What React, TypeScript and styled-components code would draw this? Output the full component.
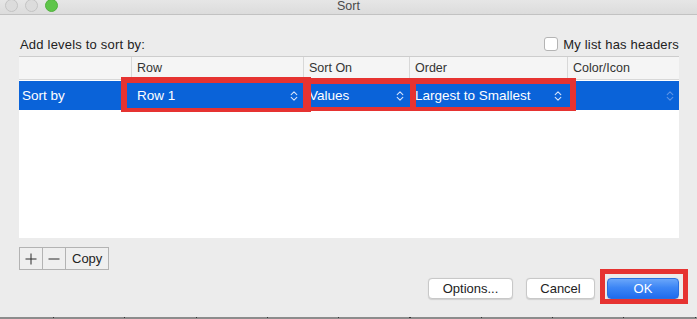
import styled, {createGlobalStyle} from "styled-components";

const GlobalStyle = createGlobalStyle`
  html, body {
    margin: 0;
    padding: 0;
    background: #ececec;
    font-family: "Liberation Sans", Arial, sans-serif;
    -webkit-font-smoothing: antialiased;
  }
`

const columns = [
    {title: "", value: "Sort by", width: "112px", select: false},
    {title: "Row", value: "Row 1", width: "172px", select: true},
    {title: "Sort On", value: "Values", width: "106px", select: true},
    {title: "Order", value: "Largest to Smallest", width: "158px", select: true},
    {title: "Color/Icon", value: "", width: "1fr", select: true},
]

const gridCols = columns.map(c => c.width).join(" ")

const Chevrons = ({faded}: { faded?: boolean }) => (
    <ChevronBox width="8" height="12" viewBox="0 0 8 12" $faded={faded}>
        <path d="M1.2 4.6 L4 1.8 L6.8 4.6" />
        <path d="M1.2 7.4 L4 10.2 L6.8 7.4" />
    </ChevronBox>
)

const PlusIcon = () => (
    <SegIcon width="12" height="12" viewBox="0 0 12 12">
        <path d="M6 0.5 V11.5 M0.5 6 H11.5" />
    </SegIcon>
)

const MinusIcon = () => (
    <SegIcon width="12" height="12" viewBox="0 0 12 12">
        <path d="M0.5 6 H11.5" />
    </SegIcon>
)

export default function App() {
    return <>
        <GlobalStyle/>
        <Window>
            <TitleBar>
                <Lights>
                    <Light/>
                    <Light/>
                    <Light $color="#5fc54a" $border="#52b13f"/>
                </Lights>
                <Title>Sort</Title>
            </TitleBar>

            <Content>
                <TopRow>
                    <Label>Add levels to sort by:</Label>
                    <CheckLabel>
                        <CheckBox/>
                        My list has headers
                    </CheckLabel>
                </TopRow>

                <Table>
                    <HeaderRow>
                        {columns.map((c, i) => (
                            <HeaderCell key={i} $first={i === 0}>{c.title}</HeaderCell>
                        ))}
                    </HeaderRow>
                    <SelectedRow>
                        {columns.map((c, i) => (
                            <Cell key={i} $first={i === 0}>
                                <span>{c.value}</span>
                                {c.select && <Chevrons faded={i === 4}/>}
                            </Cell>
                        ))}
                        <Highlight $left={102} $top={-4} $width={190} $height={35}/>
                        <Highlight $left={284} $top={-3} $width={113} $height={33}/>
                        <Highlight $left={391} $top={-3} $width={166} $height={33}/>
                    </SelectedRow>
                </Table>

                <Segmented>
                    <SegButton $narrow><PlusIcon/></SegButton>
                    <SegButton $narrow><MinusIcon/></SegButton>
                    <SegButton>Copy</SegButton>
                </Segmented>

                <Actions>
                    <PushButton style={{width: 85}}>Options...</PushButton>
                    <PushButton style={{width: 69}}>Cancel</PushButton>
                    <OkWrap>
                        <PushButton $primary style={{width: 72}}>OK</PushButton>
                        <OkHighlight/>
                    </OkWrap>
                </Actions>
            </Content>

            <Footer/>
        </Window>
    </>
}

const Window = styled.div`
  width: 697px;
  height: 319px;
  display: flex;
  flex-direction: column;
  background: #ececec;
  overflow: hidden;
`

const TitleBar = styled.div`
  position: relative;
  height: 14px;
  flex-shrink: 0;
  display: flex;
  align-items: center;
  background: linear-gradient(180deg, #e6e6e6 0%, #dcdcdc 100%);
  border-bottom: 1px solid #c2c2c2;
`

const Lights = styled.div`
  display: flex;
  gap: 7px;
  padding-left: 5px;
  margin-top: -3px;
`

const Light = styled.div<{ $color?: string, $border?: string }>`
  width: 11px;
  height: 11px;
  border-radius: 50%;
  background: ${p => p.$color || "#dcdcdc"};
  border: 0.5px solid ${p => p.$border || "#c4c4c4"};
`

const Title = styled.div`
  position: absolute;
  left: 0;
  right: 0;
  top: 0;
  line-height: 12px;
  text-align: center;
  font-size: 12.5px;
  color: #4a4a4a;
`

const Content = styled.div`
  padding: 0 18px 0 19px;
  display: flex;
  flex-direction: column;
`

const TopRow = styled.div`
  margin-top: 22px;
  height: 14px;
  display: flex;
  align-items: center;
  justify-content: space-between;
  font-size: 13px;
  color: #222;
`

const Label = styled.span`
  padding-left: 1px;
  letter-spacing: 0.2px;
`

const CheckLabel = styled.label`
  display: flex;
  align-items: center;
  gap: 5px;
  letter-spacing: 0.2px;
`

const CheckBox = styled.span`
  width: 12px;
  height: 12px;
  background: #fff;
  border: 1px solid #b4b4b4;
  border-radius: 3px;
`

const Table = styled.div`
  margin-top: 5px;
  height: 181px;
  background: #fff;
  border-top: 1px solid #cdcdcd;
  display: flex;
  flex-direction: column;
`

const HeaderRow = styled.div`
  display: grid;
  grid-template-columns: ${gridCols};
  height: 22px;
  background: #f5f5f5;
  border-bottom: 1px solid #d8d8d8;
`

const HeaderCell = styled.div<{ $first?: boolean }>`
  display: flex;
  align-items: center;
  padding-left: 5px;
  font-size: 12.5px;
  color: #333;
  border-left: ${p => p.$first ? "none" : "1px solid #d8d8d8"};
`

const SelectedRow = styled.div`
  position: relative;
  margin-top: 1px;
  display: grid;
  grid-template-columns: ${gridCols};
  height: 29px;
  background: #0a63d9;
  color: #fff;
  font-size: 13.5px;
`

const Cell = styled.div<{ $first?: boolean }>`
  display: flex;
  align-items: center;
  justify-content: space-between;
  padding: 0 5px 0 ${p => p.$first ? "3px" : "6px"};
  white-space: nowrap;
`

const ChevronBox = styled.svg<{ $faded?: boolean }>`
  flex-shrink: 0;
  fill: none;
  stroke: ${p => p.$faded ? "#5d94e6" : "#d6e4fb"};
  stroke-width: 1.1;
  stroke-linecap: round;
  stroke-linejoin: round;
`

const Highlight = styled.div<{ $left: number, $top: number, $width: number, $height: number }>`
  position: absolute;
  left: ${p => p.$left}px;
  top: ${p => p.$top}px;
  width: ${p => p.$width}px;
  height: ${p => p.$height}px;
  box-sizing: border-box;
  border: 6px solid #e63331;
  border-bottom-width: 4px;
  pointer-events: none;
`

const Segmented = styled.div`
  margin-top: 9px;
  display: flex;
  align-self: flex-start;
  height: 23px;
  border: 1px solid #b3b3b3;
  box-sizing: border-box;
  background: #efefef;
`

const SegButton = styled.div<{ $narrow?: boolean }>`
  width: ${p => p.$narrow ? "22px" : "auto"};
  padding: ${p => p.$narrow ? "0" : "0 6px"};
  display: flex;
  align-items: center;
  justify-content: center;
  font-size: 13px;
  color: #222;
  border-left: 1px solid #b3b3b3;

  &:first-child {
    border-left: none;
  }
`

const SegIcon = styled.svg`
  fill: none;
  stroke: #2a2a2a;
  stroke-width: 1;
`

const Actions = styled.div`
  margin-top: 8px;
  display: flex;
  justify-content: flex-end;
  gap: 13px;
`

const PushButton = styled.div<{ $primary?: boolean }>`
  height: 21px;
  box-sizing: border-box;
  display: flex;
  align-items: center;
  justify-content: center;
  border-radius: 4px;
  font-size: 13px;
  color: ${p => p.$primary ? "#fff" : "#222"};
  background: ${p => p.$primary
          ? "linear-gradient(180deg, #6aa6fa 0%, #3d86f5 45%, #1f6cee 100%)"
          : "#fff"};
  border: 1px solid ${p => p.$primary ? "#2a6fe0" : "#c8c8c8"};
  box-shadow: 0 0.5px 1px rgba(0, 0, 0, 0.12);
`

const OkWrap = styled.div`
  position: relative;
  margin-left: -1px;
`

const OkHighlight = styled.div`
  position: absolute;
  left: -7px;
  right: -9px;
  top: -9px;
  bottom: -5px;
  border: 5px solid #e63331;
  pointer-events: none;
`

const Footer = styled.div`
  margin-top: auto;
  height: 2px;
  flex-shrink: 0;
  background: repeating-linear-gradient(90deg, #333 0 1px, transparent 1px 71.3px) 53px 0 / 100% 1px no-repeat,
  #8c8c8c;
  background-repeat: repeat-x, no-repeat;
`
